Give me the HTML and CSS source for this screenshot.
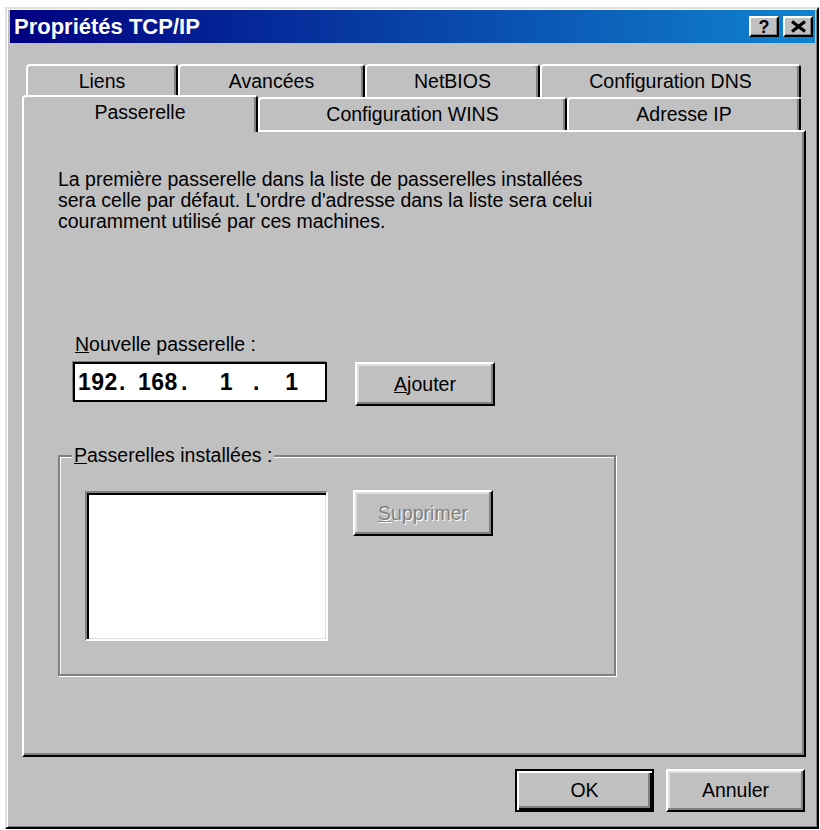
FILE: index.html
```html
<!DOCTYPE html>
<html lang="fr">
<head>
<meta charset="utf-8">
<title>Propriétés TCP/IP</title>
<link rel="stylesheet" href="styles.css">
</head>
<body>
<div class="window">
  <div class="titlebar">
    <span class="title">Propriétés TCP/IP</span>
    <div class="title-buttons">
      <span class="tbtn help">?</span>
      <span class="tbtn close">
        <svg width="17" height="13" viewBox="0 0 17 13"><path d="M2 1.5 L15 11.5 M15 1.5 L2 11.5" stroke="#000" stroke-width="3.2" fill="none"/></svg>
      </span>
    </div>
  </div>
  <div class="body">
    <div class="tabs">
      <div class="tabrow back">
        <div class="tab t-liens">Liens</div>
        <div class="tab t-avancees">Avancées</div>
        <div class="tab t-netbios">NetBIOS</div>
        <div class="tab t-dns">Configuration DNS</div>
      </div>
      <div class="tabrow front">
        <div class="tab t-passerelle selected">Passerelle</div>
        <div class="tab t-wins">Configuration WINS</div>
        <div class="tab t-ip">Adresse IP</div>
      </div>
    </div>
    <div class="panel">
      <p class="intro">La première passerelle dans la liste de passerelles installées<br>sera celle par défaut. L'ordre d'adresse dans la liste sera celui<br>couramment utilisé par ces machines.</p>
      <div class="field-label"><u>N</u>ouvelle passerelle :</div>
      <div class="add-row">
        <div class="ipbox">
          <span class="oct o1">192</span><span class="dot">.</span><span class="oct o2">168</span><span class="dot">.</span><span class="oct o3">1</span><span class="dot">.</span><span class="oct o4">1</span>
        </div>
        <button class="btn"><span><u>A</u>jouter</span></button>
      </div>
      <fieldset class="group">
        <legend><u>P</u>asserelles installées :</legend>
        <div class="group-row">
          <div class="listbox"></div>
          <button class="btn disabled"><span><u>S</u>upprimer</span></button>
        </div>
      </fieldset>
    </div>
    <div class="footer">
      <button class="btn default">OK</button>
      <button class="btn">Annuler</button>
    </div>
  </div>
</div>
</body>
</html>
```

FILE: styles.css
```css
* { box-sizing: border-box; }
html, body { margin: 0; padding: 0; background: #fff; }
body {
  font-family: "Liberation Sans", Arial, sans-serif;
  font-size: 19.5px;
  color: #000;
}
.window {
  margin: 7px 0 0 5px;
  width: 814px;
  height: 822px;
  background: #c0c0c0;
  border: 2px solid;
  border-color: #dfdfdf #000 #000 #dfdfdf;
  box-shadow: inset 1px 1px #fff, inset -1px -1px #808080;
  padding: 1px 2px 0 3px;
  display: flex;
  flex-direction: column;
}
.titlebar {
  height: 33px;
  flex: none;
  background: linear-gradient(90deg, #000080, #1084d0);
  display: flex;
  align-items: center;
  justify-content: space-between;
  padding: 0 2px 0 4px;
}
.title {
  color: #fff;
  font-weight: bold;
  font-size: 22px;
}
.title-buttons { display: flex; gap: 4px; }
.tbtn {
  width: 30px;
  height: 21px;
  background: #c0c0c0;
  border: 2px solid;
  border-color: #fff #000 #000 #fff;
  box-shadow: inset -1px -1px #808080;
  display: flex;
  align-items: center;
  justify-content: center;
}
.help { font-weight: bold; font-size: 18px; line-height: 1; }
.close svg { display: block; }
.body {
  flex: 1;
  display: flex;
  flex-direction: column;
  padding: 21px 9px 0 12px;
}
.tabrow { display: flex; height: 33px; }
.tabrow.back { padding-left: 4px; }
.tab {
  background: #c0c0c0;
  border-top: 2px solid #fff;
  border-left: 2px solid #fff;
  border-right: 2px solid #000;
  box-shadow: inset -2px 0 #808080;
  border-radius: 4px 4px 0 0;
  display: flex;
  align-items: center;
  justify-content: center;
  padding-bottom: 1px;
}
.t-liens { width: 152px; }
.t-avancees { width: 187px; }
.t-netbios { width: 175px; }
.t-dns { width: 261px; }
.t-passerelle { width: 236px; }
.t-wins { width: 309px; }
.t-ip { width: 234px; }
.tab.selected {
  position: relative;
  z-index: 1;
  margin-top: -2px;
  margin-bottom: -2px;
  padding-bottom: 4px;
}
.panel {
  height: 627px;
  flex: none;
  border: 2px solid;
  border-color: #fff #000 #000 #fff;
  box-shadow: inset -2px -2px #808080;
  padding: 0 0 0 34px;
}
.intro {
  margin: 37px 0 0;
  line-height: 21px;
}
.field-label {
  margin: 102px 0 0 17px;
  line-height: 21px;
}
.add-row {
  display: flex;
  align-items: flex-start;
  gap: 28px;
  margin: 7px 0 0 15px;
}
.ipbox {
  width: 254px;
  height: 40px;
  background: #fff;
  border: 2px solid #000;
  box-shadow: -1px -1px #808080;
  display: flex;
  align-items: center;
  padding-left: 3px;
  font-weight: bold;
  font-size: 23px;
  letter-spacing: 0.5px;
}
.oct, .dot { display: inline-block; }
.o1 { width: 41px; }
.o2 { width: 43px; }
.o3 { width: 53px; text-align: center; }
.o4 { width: 40px; text-align: center; }
.dot { width: 19px; }
.btn {
  font: inherit;
  color: #000;
  background: #c0c0c0;
  border: 2px solid;
  border-color: #fff #000 #000 #fff;
  box-shadow: inset -2px -2px #808080, inset 2px 2px #dfdfdf;
  padding: 0;
  width: 140px;
  height: 44px;
  display: flex;
  align-items: center;
  justify-content: center;
  flex: none;
}
.btn.disabled {
  color: #808080;
  text-shadow: 1px 1px #fff;
  height: 46px;
  margin-top: -1px;
}
.group {
  margin: 39px 0 0;
  width: 558px;
  height: 231px;
  border: 2px solid #808080;
  box-shadow: inset 1px 1px #fff, 1px 1px #fff;
  padding: 25px 0 0 0;
  min-width: 0;
}
.group legend {
  margin-left: 12px;
  padding: 0 2px;
  line-height: 21px;
  background: #c0c0c0;
}
.group-row {
  display: flex;
  align-items: flex-start;
  gap: 25px;
  margin-left: 25px;
}
.listbox {
  width: 243px;
  height: 150px;
  background: #fff;
  border: 2px solid;
  border-color: #808080 #fff #fff #808080;
  box-shadow: inset 2px 2px #000, inset -1px -1px #dfdfdf;
}
.footer {
  display: flex;
  justify-content: flex-end;
  gap: 12px;
  margin-top: 12px;
  padding-right: 1px;
}
.footer .btn { width: 139px; height: 43px; }
.btn.default {
  border: 2px solid #000;
  box-shadow: inset 2px 2px #fff, inset -2px -2px #000, inset -4px -4px #808080;
}
```
